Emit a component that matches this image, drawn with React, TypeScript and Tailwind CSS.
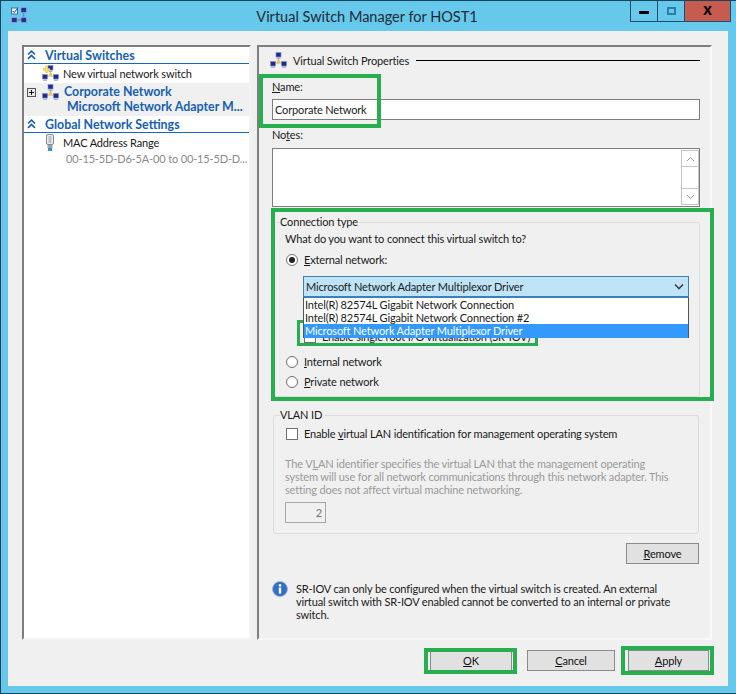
import React from "react";

function Net({ plus = false, className = "" }: { plus?: boolean; className?: string }) {
  const Mon = ({ x, y, c }: { x: number; y: number; c: string }) => (
    <g>
      <rect x={x} y={y} width="5" height="4.5" fill={c} stroke="#8c93b8" strokeWidth="0.6" />
      <rect x={x + 0.5} y={y + 5} width="4" height="1.2" fill="#9aa0b5" />
    </g>
  );
  return (
    <svg viewBox="0 0 17 17" className={className} width="17" height="17">
      <path d="M8.5 6V10M3.5 11H13.5" stroke="#d8b24a" strokeWidth="1.2" fill="none" />
      <rect x="7" y="8.5" width="3" height="2.5" fill="#e7c55f" />
      <Mon x={6} y={0.5} c="#1c2a9c" />
      <Mon x={0.5} y={9.5} c="#1c2a9c" />
      <Mon x={11.5} y={9.5} c="#1c2a9c" />
      {plus && <path d="M4.5 0.8V8M1 4.4H8" stroke="#e8c32a" strokeWidth="2.2" fill="none" />}
      {plus && <path d="M4.5 1.6V7.2M1.8 4.4H7.2" stroke="#fbe88a" strokeWidth="0.8" fill="none" />}
    </svg>
  );
}

function AppIcon() {
  return (
    <svg viewBox="0 0 17 17" width="17" height="17" className="ml-[10px] mt-[6px]">
      <rect x="0.5" y="1" width="6" height="6" fill="#eef6fb" stroke="#3a6fb0" />
      <path d="M1.8 4L3.2 5.6L7 0.8" stroke="#1d4f96" strokeWidth="1" fill="none" />
      <rect x="10" y="0.5" width="5.5" height="5" fill="#26308f" stroke="#a9afce" strokeWidth="0.6" />
      <rect x="0.5" y="10.5" width="5.5" height="5" fill="#26308f" stroke="#a9afce" strokeWidth="0.6" />
      <rect x="10" y="10.5" width="5.5" height="5" fill="#26308f" stroke="#a9afce" strokeWidth="0.6" />
      <path d="M12.7 6V10M6 13H10" stroke="#6d7aa8" strokeWidth="1" />
    </svg>
  );
}

function Chevrons() {
  return (
    <svg viewBox="0 0 9 10" width="9" height="10" className="ml-[3px] mr-[9px] shrink-0">
      <path d="M1 4.5L4.5 1.2L8 4.5M1 8.8L4.5 5.5L8 8.8" stroke="#1560b5" strokeWidth="1.7" fill="none" />
    </svg>
  );
}

function SectionHead({ children }: { children: React.ReactNode }) {
  return (
    <div className="flex items-center h-[17px] border-b border-[#1a66b8] text-[#1560b5] font-bold text-[12.4px] tracking-normal">
      <Chevrons />
      {children}
    </div>
  );
}

function Radio({ on = false }: { on?: boolean }) {
  return (
    <span className="w-[12px] h-[12px] rounded-full border border-[#707070] bg-white flex items-center justify-center shrink-0">
      {on && <span className="w-[6px] h-[6px] rounded-full bg-[#222]" />}
    </span>
  );
}

function Btn({ children, className = "" }: { children: React.ReactNode; className?: string }) {
  return (
    <div className={`h-[21px] bg-[#e1e1e1] border border-[#8a8a8a] flex items-center justify-center text-[#111] ${className}`}>
      {children}
    </div>
  );
}

function Green({ className }: { className: string }) {
  return <div className={`absolute border-[#27ae4f] pointer-events-none ${className}`} />;
}

export default function App() {
  return (
    <div className="relative w-[736px] h-[694px] overflow-hidden bg-[#66c8ea] border border-[#17445c] border-r-0 text-[11px] tracking-[-0.15px] leading-[13px] text-[#1a1a1a] font-['Lato',sans-serif] flex flex-col">
      <div className="relative h-[30px] shrink-0 flex">
        <AppIcon />
        <div className="absolute left-0 right-[3px] top-[6px] text-center text-[14.5px] tracking-normal leading-[20px] text-[#1c2b33]">
          Virtual Switch Manager for HOST1
        </div>
        <div className="absolute right-[5px] top-[-1px] flex h-[22px] border border-t-0 border-[#1f4f68]">
          <div className="w-[27px] flex items-center justify-center border-r border-[#1f4f68]">
            <div className="w-[10px] h-[3px] bg-black mt-[3px]" />
          </div>
          <div className="w-[26px] flex items-center justify-center">
            <div className="w-[9px] h-[8px] border-2 border-[#2b7fa3]" />
          </div>
          <div className="w-[46px] bg-[#c75b50] flex items-center justify-center border-l border-[#1f4f68] text-black font-black text-[16px] leading-none pb-[3px]">
            x
          </div>
        </div>
      </div>

      <div className="ml-[7px] w-[720px] h-[655px] bg-[#f0f0f0] flex flex-col">
        <div className="flex gap-[6px] pl-[14px] pt-[14px] h-[609px]">
          <div className="w-[229px] h-[595px] bg-white border-2 border-[#7d7d7d] border-r-[#f4f4f4] border-b-[#f4f4f4]">
            <SectionHead>Virtual Switches</SectionHead>
            <div className="flex items-center h-[19px] pl-[18px]">
              <Net plus className="mr-[4px] shrink-0" />
              New virtual network switch
            </div>
            <div className="bg-[#f0f0f0] h-[33px] relative pl-[40px] pt-[2px] text-[#1560b5] font-bold text-[12.4px] tracking-normal">
              <div className="absolute left-[3px] top-[5px] w-[9px] h-[9px] border border-[#555] bg-[#e8e8e8] flex items-center justify-center">
                <svg viewBox="0 0 7 7" width="7" height="7"><path d="M3.5 1V6M1 3.5H6" stroke="#111" strokeWidth="1" /></svg>
              </div>
              <Net className="absolute left-[18px] top-[1px]" />
              <div>Corporate Network</div>
              <div className="mt-[2px] ml-[3px] whitespace-nowrap">Microsoft Network Adapter M...</div>
            </div>
            <SectionHead>Global Network Settings</SectionHead>
            <div className="relative h-[19px] pl-[39px] flex items-center">
              <svg viewBox="0 0 10 17" width="10" height="17" className="absolute left-[21px] top-[1px]">
                <rect x="1.5" y="0.5" width="7" height="10" rx="1.5" fill="#e8ecef" stroke="#7f8a92" />
                <rect x="3.5" y="2" width="3" height="7" fill="#b7c1c8" />
                <rect x="2.5" y="11" width="5" height="3" fill="#8fa6b8" />
                <rect x="3" y="14" width="4" height="3" fill="#3c8fc4" />
              </svg>
              MAC Address Range
            </div>
            <div className="pl-[42px] text-[#8a8a8a] whitespace-nowrap">00-15-5D-D6-5A-00 to 00-15-5D-D...</div>
          </div>

          <div className="w-[455px] h-[595px] border-2 border-[#7d7d7d] border-r-[#f8f8f8] border-b-[#f8f8f8] pl-[13px] pr-[10px]">
            <div className="flex items-center h-[25px] mt-[1px]">
              <Net className="shrink-0 ml-[-2px]" />
              <span className="ml-[6px] mr-[7px] whitespace-nowrap text-[#222]">Virtual Switch Properties</span>
              <div className="flex-1 h-px bg-black" />
            </div>
            <div className="mt-[7px] h-[13px]"><u>N</u>ame:</div>
            <div className="mt-[6px] h-[21px] bg-white border border-[#7d7d7d] pl-[2px] flex items-center">Corporate Network</div>
            <div className="mt-[8px] h-[13px]">No<u>t</u>es:</div>
            <div className="mt-[7px] h-[59px] bg-white border border-[#7d7d7d] flex justify-end p-[1px] pr-0">
              <div className="w-[18px] border border-[#c4c4c4] flex flex-col justify-between bg-white text-[#888]">
                <div className="h-[16px] border-b border-[#c4c4c4] flex items-center justify-center">
                  <svg viewBox="0 0 9 6" width="9" height="6"><path d="M1 5L4.5 1.5L8 5" stroke="#999" fill="none" /></svg>
                </div>
                <div className="h-[16px] border-t border-[#c4c4c4] flex items-center justify-center">
                  <svg viewBox="0 0 9 6" width="9" height="6"><path d="M1 1L4.5 4.5L8 1" stroke="#999" fill="none" /></svg>
                </div>
              </div>
            </div>

            <fieldset className="mt-[8px] h-[182px] border border-[#dcdcdc] rounded-[3px] ml-[1px] mr-[1px] pl-[12px] pr-[10px]">
              <legend className="ml-[-6px] pr-[2px] leading-[14px]">Connection type</legend>
              <div className="mt-[3px] ml-[-1px]">What do you want to connect this virtual switch to?</div>
              <div className="mt-[8px] flex items-center gap-[6px]">
                <Radio on />
                <span><u>E</u>xternal network:</span>
              </div>
              <div className="relative ml-[17px] mt-[10px] h-[21px] w-[386px] bg-[#bfe3f7] border border-[#3f7fb5] flex items-center pl-[2px] pr-[4px] justify-between">
                <span>Microsoft Network Adapter Multiplexor Driver</span>
                <svg viewBox="0 0 10 7" width="10" height="7"><path d="M1 1.5L5 5.5L9 1.5" stroke="#444" strokeWidth="1.7" fill="none" /></svg>
                <div className="absolute left-[-1px] top-[20px] w-[386px] h-[41px] z-10 bg-white border border-[#555] border-t-[#3f7fb5] border-b-0 overflow-hidden flex flex-col">
                  <div className="h-[12px] mt-[1px] pl-[1px] leading-[12px] shrink-0 whitespace-nowrap">Intel(R) 82574L Gigabit Network Connection</div>
                  <div className="h-[13px] pl-[1px] leading-[14px] shrink-0 whitespace-nowrap overflow-hidden">Intel(R) 82574L Gigabit Network Connection #2</div>
                  <div className="h-[14px] pl-[1px] leading-[14px] shrink-0 bg-[#3399ff] text-white whitespace-nowrap">Microsoft Network Adapter Multiplexor Driver</div>
                </div>
              </div>
              <div className="ml-[18px] mt-[33px] flex items-center gap-[6px] h-[13px]">
                <span className="w-[12px] h-[12px] border border-[#707070] bg-white shrink-0" />
                <span>Enable single root I/O virtualization (SR-IOV)</span>
              </div>
              <div className="mt-[12px] flex items-center gap-[6px]">
                <Radio />
                <span><u>I</u>nternal network</span>
              </div>
              <div className="mt-[7px] flex items-center gap-[6px]">
                <Radio />
                <span><u>P</u>rivate network</span>
              </div>
            </fieldset>

            <fieldset className="mt-[11px] h-[126px] border border-[#dcdcdc] rounded-[3px] ml-[1px] mr-[1px] pl-[12px] pr-[10px]">
              <legend className="ml-[-6px] pr-[2px] leading-[14px]">VLAN ID</legend>
              <div className="mt-[5px] flex items-center gap-[6px]">
                <span className="w-[12px] h-[12px] border border-[#707070] bg-white shrink-0" />
                <span>Enable <u>v</u>irtual LAN identification for management operating system</span>
              </div>
              <div className="mt-[17px] ml-[-1px] text-[#9a9a9a] whitespace-nowrap">
                The V<u>L</u>AN identifier specifies the virtual LAN that the management operating<br />
                system will use for all network communications through this network adapter. This<br />
                setting does not affect virtual machine networking.
              </div>
              <div className="mt-[6px] ml-[-1px] w-[41px] h-[21px] border border-[#a8a8a8] text-[#777] flex items-center justify-end pr-[3px]">2</div>
            </fieldset>

            <div className="flex justify-end mt-[9px] mr-[1px]">
              <Btn className="w-[73px]"><span><u>R</u>emove</span></Btn>
            </div>

            <div className="flex mt-[17px] gap-[8px]">
              <svg viewBox="0 0 16 16" width="16" height="16" className="shrink-0">
                <circle cx="8" cy="8" r="7.5" fill="#2f6fc4" stroke="#a5b4d6" />
                <circle cx="8" cy="4.4" r="1.4" fill="#fff" />
                <rect x="6.8" y="6.6" width="2.4" height="6" fill="#fff" />
              </svg>
              <div className="mt-[1px] whitespace-nowrap">
                SR-IOV can only be configured when the virtual switch is created. An external<br />
                virtual switch with SR-IOV enabled cannot be converted to an internal or private<br />
                switch.
              </div>
            </div>
          </div>
        </div>

        <div className="flex items-center justify-end pr-[19px] mt-[10px]">
          <Btn className="w-[82px]"><span><u>O</u>K</span></Btn>
          <Btn className="w-[88px] ml-[15px]"><span><u>C</u>ancel</span></Btn>
          <Btn className="w-[81px] ml-[13px]"><span><u>A</u>pply</span></Btn>
        </div>
      </div>

      <Green className="left-[258px] top-[73px] w-[122px] h-[54px] border-[4px]" />
      <Green className="left-[270px] top-[207px] w-[443px] h-[193px] border-[4px]" />
      <Green className="left-[296px] top-[319px] w-[241px] h-[26px] border-[3px]" />
      <Green className="left-[423px] top-[647px] w-[93px] h-[26px] border-[4px]" />
      <Green className="left-[620px] top-[645px] w-[93px] h-[29px] border-[4px]" />
    </div>
  );
}
